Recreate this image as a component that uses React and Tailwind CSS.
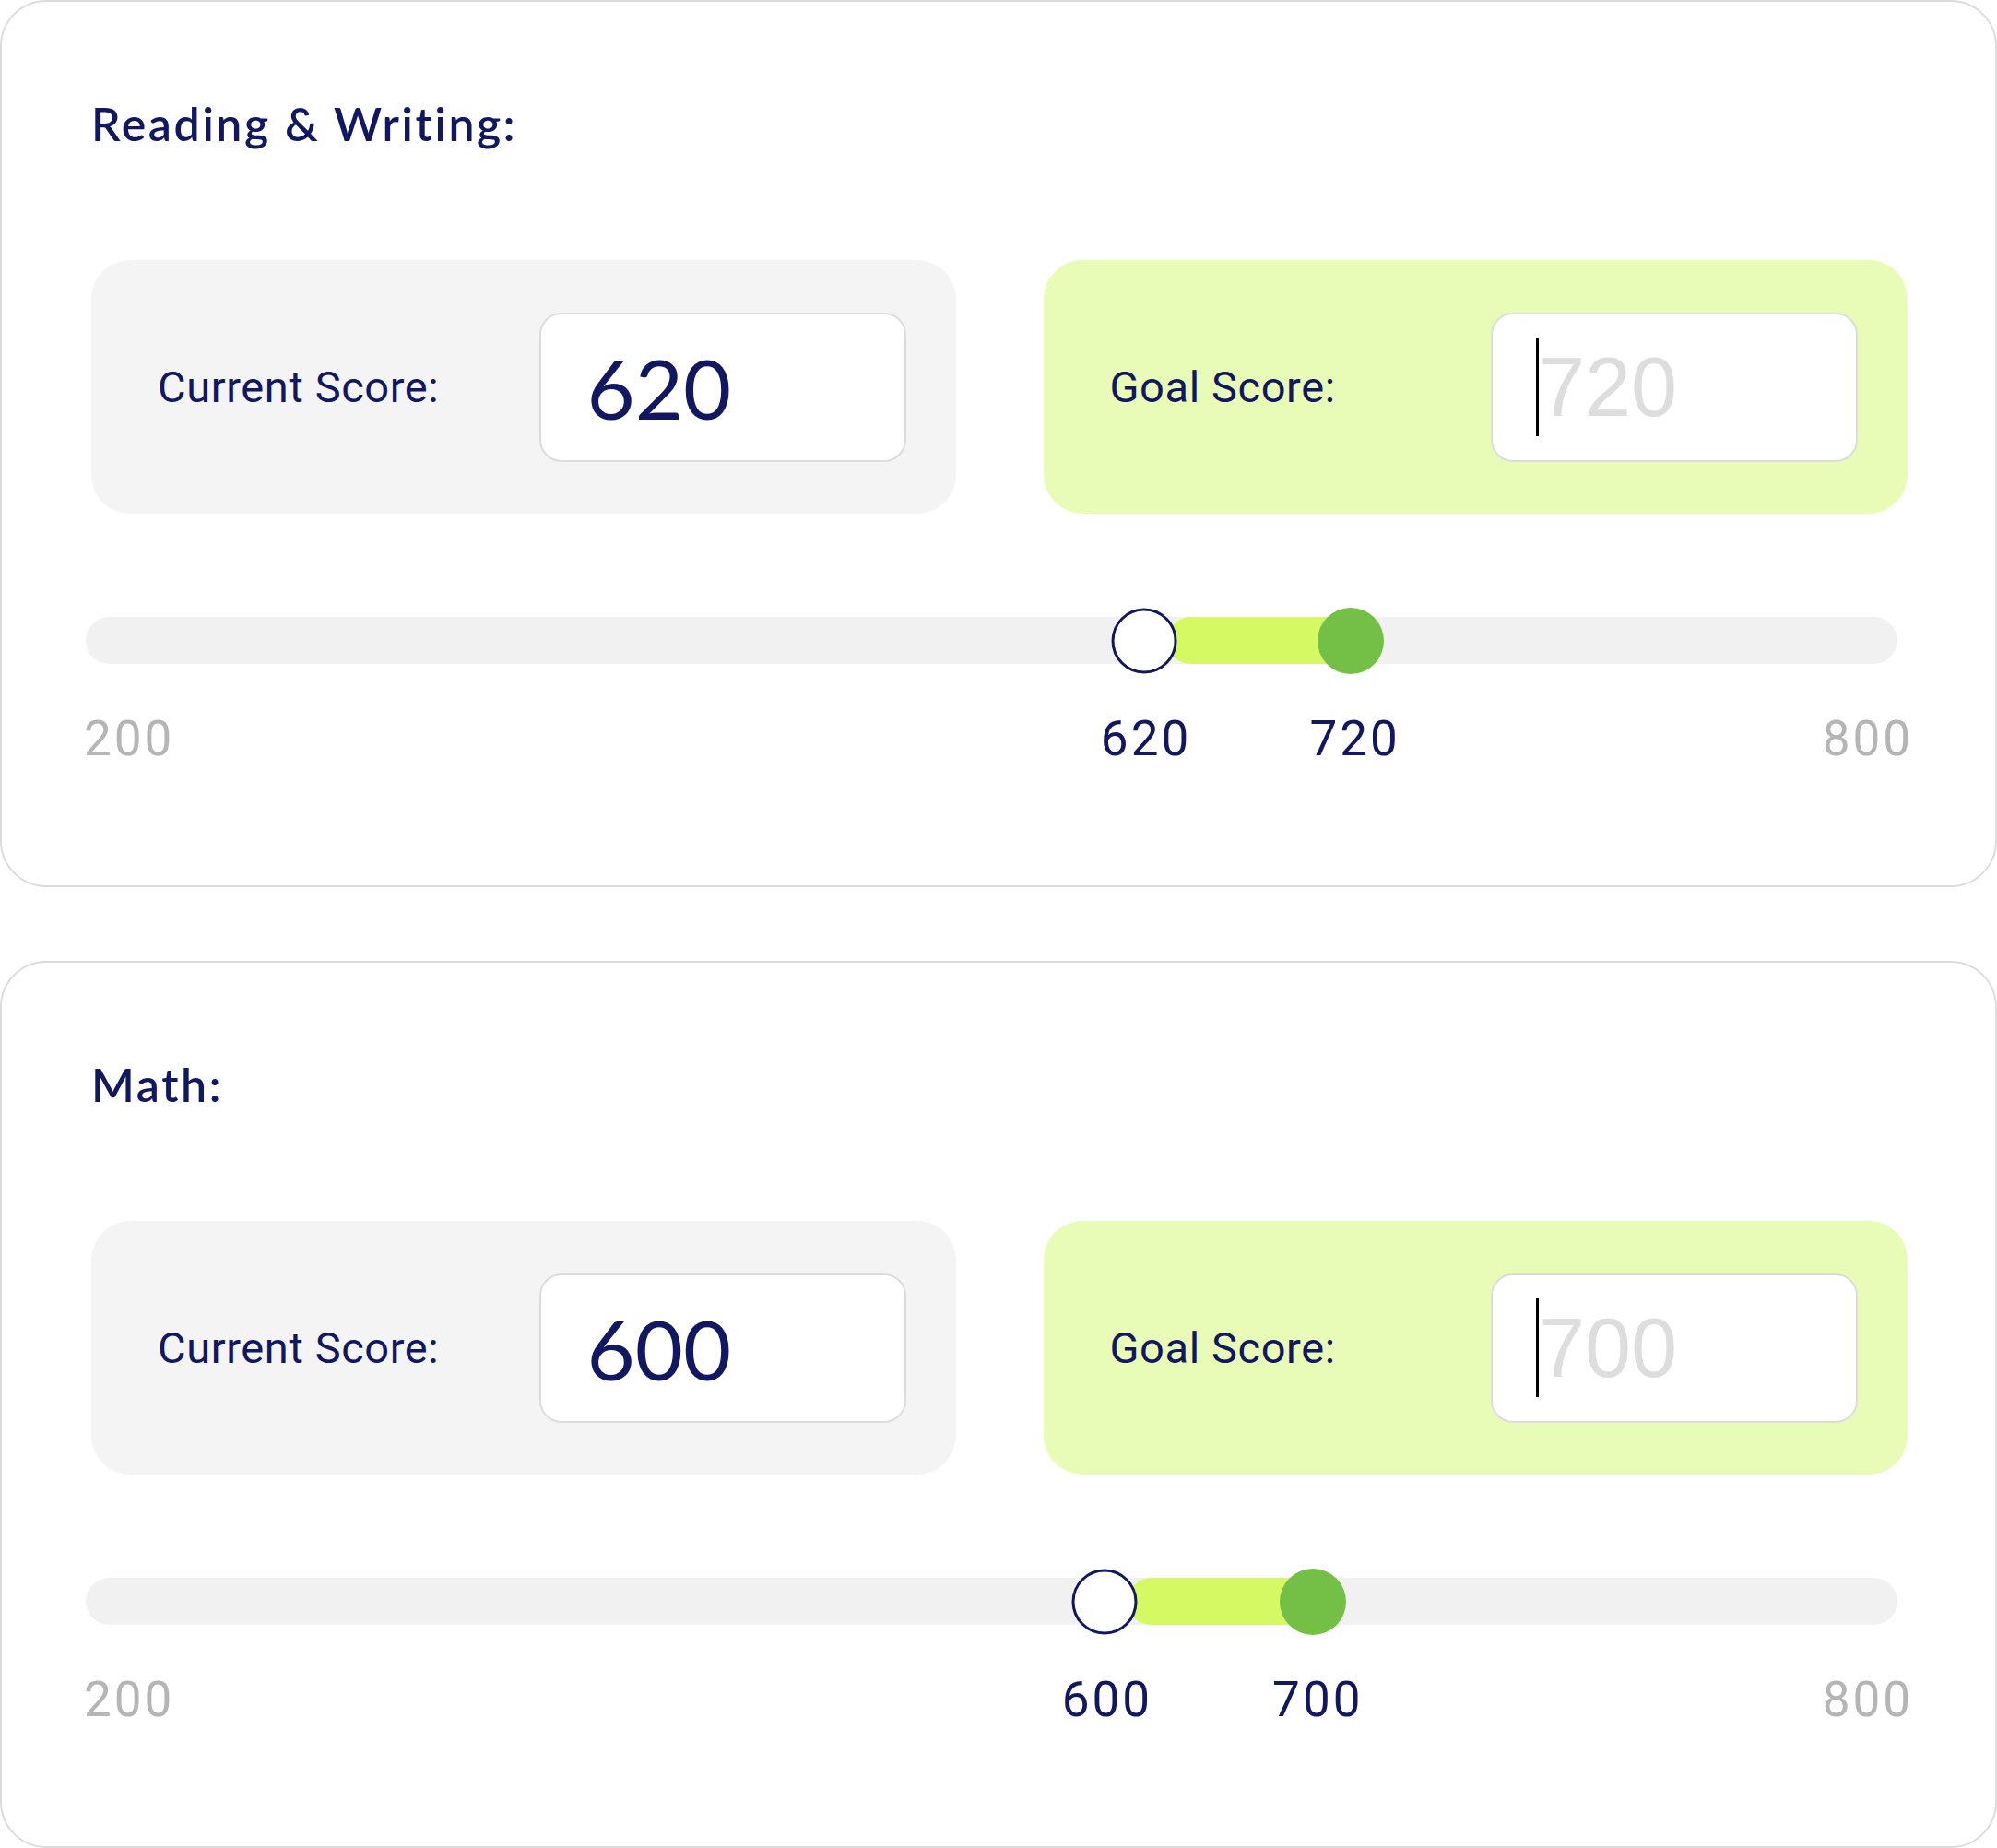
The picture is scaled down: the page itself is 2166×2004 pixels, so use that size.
import React from 'react';

const SECTIONS = [
  { title: 'Reading & Writing:', current: 620, goal: 720, at: [58.4, 69.8] },
  { title: 'Math:', current: 600, goal: 700, at: [56.25, 67.75] },
];

const NAVY = 'text-[#111761]';

function ScoreBox({ label, tone, children }) {
  return (
    <div
      className={`flex h-[275px] items-center justify-between rounded-[42px] pl-[72px] pr-[54px] ${
        tone === 'goal' ? 'bg-[#e8fcb7]' : 'bg-[#f4f4f4]'
      }`}
    >
      <span className={`font-['Roboto',sans-serif] text-[47px] leading-none tracking-[0.6px] ${NAVY}`}>{label}</span>
      <div className="flex h-[162px] w-[398px] items-center rounded-[24px] border-2 border-[#dcdcdc] bg-white">
        {children}
      </div>
    </div>
  );
}

function RangeSlider({ current, goal, at }) {
  const [from, to] = at;
  return (
    <>
      {/* track with the selected span between the two thumbs */}
      <div className="relative mt-[112px] mr-[11px] h-[51px] rounded-full bg-[#f1f1f1]">
        <div
          className="absolute inset-y-0 rounded-full bg-[#d4f962]"
          style={{ left: `calc(${from}% + 25px)`, width: `calc(${to - from}% - 25px)` }}
        />
        <div
          className="absolute top-1/2 h-[71px] w-[71px] -translate-x-1/2 -translate-y-1/2 rounded-full border-[3px] border-[#111761] bg-white"
          style={{ left: `${from}%` }}
        />
        <div
          className="absolute top-1/2 h-[72px] w-[72px] -translate-x-1/2 -translate-y-1/2 rounded-full bg-[#74bf46]"
          style={{ left: `${to}%` }}
        />
      </div>

      <div className="relative mt-[55px] mr-[11px] flex h-[53px] justify-between font-['Roboto',sans-serif] text-[53px] leading-none tracking-[3px] text-[#b5b5b5]">
        <span className="-ml-[2px]">200</span>
        <span className="-mr-[17px]">800</span>
        <span className={`absolute top-0 -translate-x-1/2 pl-[5px] ${NAVY}`} style={{ left: `${from}%` }}>
          {current}
        </span>
        <span className={`absolute top-0 -translate-x-1/2 pl-[10px] ${NAVY}`} style={{ left: `${to}%` }}>
          {goal}
        </span>
      </div>
    </>
  );
}

function SectionCard({ title, current, goal, at }) {
  return (
    <div className="h-[962px] rounded-[50px] border-2 border-[#dcdcdc] bg-white pt-[107px] pl-[91px] pr-[95px]">
      <h2 className={`ml-[6px] font-['Lato',sans-serif] text-[50px] font-semibold leading-none tracking-[2.6px] ${NAVY}`}>
        {title}
      </h2>

      <div className="mt-[123px] ml-[6px] grid grid-cols-2 gap-[95px]">
        <ScoreBox label="Current Score:">
          <span className={`pl-[50px] font-['Lato',sans-serif] text-[90px] leading-none ${NAVY}`}>{current}</span>
        </ScoreBox>
        <ScoreBox label="Goal Score:" tone="goal">
          <span className="ml-[47px] h-[107px] w-[3px] bg-black" />
          <span className="font-['Liberation_Sans',Arial,sans-serif] text-[90px] leading-none text-[#dddddd]">
            {goal}
          </span>
        </ScoreBox>
      </div>

      <RangeSlider current={current} goal={goal} at={at} />
    </div>
  );
}

export default function App() {
  return (
    <div className="flex w-[2166px] flex-col gap-[80px] bg-white">
      {SECTIONS.map((s) => (
        <SectionCard key={s.title} {...s} />
      ))}
    </div>
  );
}
